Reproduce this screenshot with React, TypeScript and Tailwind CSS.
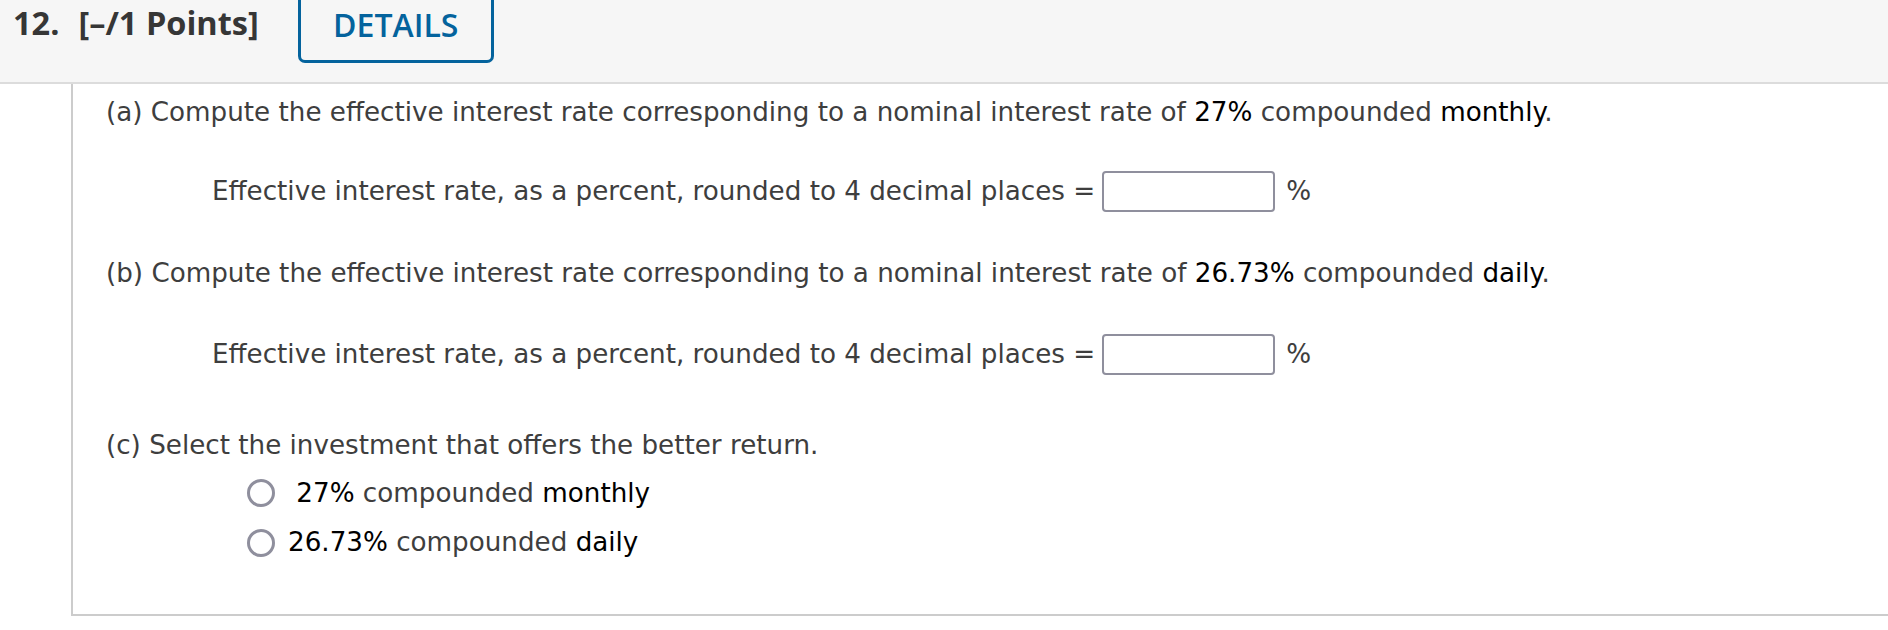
import React from 'react'

function AnswerInput() {
  return (
    <div className="ml-[7px] w-[173px] h-[41px] shrink-0 rounded-[4px] border-2 border-[#8f8f9d] bg-white" />
  )
}

function Radio() {
  return <span className="w-[28px] h-[28px] shrink-0 rounded-full border-[3.5px] border-[#8f8f9d] bg-white" />
}

export default function App() {
  return (
    <div className="w-full h-[630px] overflow-hidden bg-white">
      {/* Question header */}
      <div className="h-[84px] bg-[#f6f6f6] border-b-2 border-[#dcdcdc] flex items-start font-['Open_Sans',sans-serif]">
        <div className="h-[47px] flex items-center pl-[13px] text-[32.5px] font-bold leading-none text-[#363636]">
          <span>12.</span>
          <span className="ml-[19px]">[–/1 Points]</span>
        </div>
        <div className="ml-[39px] w-[196px] h-[63px] border-x-[3px] border-b-[3px] border-[#04639d] rounded-b-[7px] flex items-center justify-center pb-[10px] text-[32px] font-semibold leading-none text-[#04639d]">
          DETAILS
        </div>
      </div>

      {/* Question body */}
      <div className="ml-[71px] h-[532px] border-l-2 border-b-2 border-[#cccccc] font-['DejaVu_Sans',sans-serif] text-[26.2px] leading-none text-[#3e3e3e]">
        <div className="h-[56px] flex items-center pl-[33px]">
          <span>
            (a) Compute the effective interest rate corresponding to a nominal interest rate of{' '}
            <span className="text-black">27%</span> compounded <span className="text-black">monthly</span>.
          </span>
        </div>

        <div className="h-[102px] flex items-center pl-[139px]">
          <span className="whitespace-nowrap">Effective interest rate, as a percent, rounded to 4 decimal places =</span>
          <AnswerInput />
          <span className="ml-[11px]">%</span>
        </div>

        <div className="h-[63px] flex items-center pl-[33px]">
          <span>
            (b) Compute the effective interest rate corresponding to a nominal interest rate of{' '}
            <span className="text-black">26.73%</span> compounded <span className="text-black">daily</span>.
          </span>
        </div>

        <div className="h-[98px] flex items-center pl-[139px]">
          <span className="whitespace-nowrap">Effective interest rate, as a percent, rounded to 4 decimal places =</span>
          <AnswerInput />
          <span className="ml-[11px]">%</span>
        </div>

        <div className="mt-[18px] h-[49px] flex items-center pl-[33px]">
          (c) Select the investment that offers the better return.
        </div>

        <div className="h-[46px] flex items-center pl-[174px] gap-[13px]">
          <Radio />
          <span>
            <span className="text-black">{'\u00a0'}27%</span> compounded <span className="text-black">monthly</span>
          </span>
        </div>

        <div className="h-[53px] flex items-center pl-[174px] gap-[13px]">
          <Radio />
          <span>
            <span className="text-black">26.73%</span> compounded <span className="text-black">daily</span>
          </span>
        </div>
      </div>
    </div>
  )
}
